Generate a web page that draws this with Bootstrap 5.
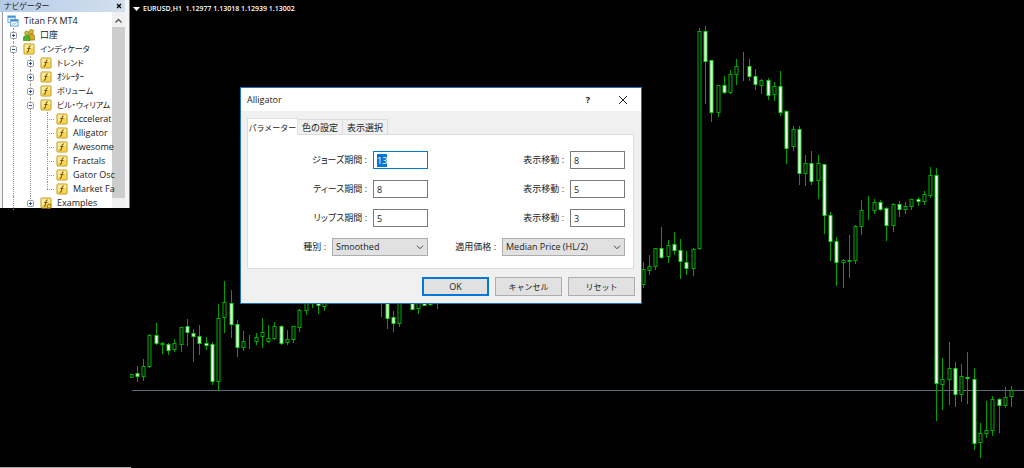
<!DOCTYPE html>
<html lang="ja">
<head>
<meta charset="utf-8">
<meta name="viewport" content="width=device-width, initial-scale=1">
<title>EURUSD,H1</title>
<link href="https://cdn.jsdelivr.net/npm/bootstrap@5.3.0/dist/css/bootstrap.min.css" rel="stylesheet">
<style>
  body { background: #000; color: #222; font: 9px/14px "Open Sans", "Noto Sans CJK JP", sans-serif; font-feature-settings: "palt"; }
  .kana { font-size: 8px; }

  /* navigator */
  .navigator { width: 130px; background: #f4f5f7; padding-right: 4px; border-right: 1px solid #777; align-self: flex-start; }
  .nav-title { height: 12px; line-height: 12px; background: linear-gradient(90deg, #b4cbe6, #d3e0ee); padding: 0 2px 0 4px; }
  .nav-title button { width: 8px; height: 8px; color: #000; }
  .nav-body { height: 196px; border-left: 1px solid #999; margin-left: 2px; background: #fff; }
  .tree { padding-top: 2px; white-space: nowrap; min-width: 0; }
  .tree ul { margin-left: 17px; }
  .tree li { position: relative; }
  .node { display: flex; align-items: center; height: 14px; }
  .node svg { width: 12px; height: 12px; flex: none; margin-right: 5px; }
  .node .pm { width: 7px; height: 7px; margin: 0 6px 0 7px; position: relative; z-index: 1; }
  .node .stub { width: 7px; height: 1px; margin: 0 2px 0 10px; border-top: 1px dotted #999; flex: none; }
  .tree .branch > li::before { content: ""; position: absolute; left: 10px; top: 0; bottom: 0; border-left: 1px dotted #999; }
  .tree .branch > li.tip::before { bottom: 7px; }
  .scroll { width: 13px; background: #f0f0f0; flex: none; }
  .scroll svg { width: 13px; height: 15px; display: block; }
  .thumb { height: 171px; background: #cdcdcd; }

  /* chart */
  .quote { color: #fff; font: 600 7px/10px "Open Sans", sans-serif; padding: 4px 3px; gap: 3px; white-space: pre; }
  .chart { inset: 0 0 auto 0; width: 100%; }
  .status-edge { left: 0; bottom: 0; width: 131px; height: 1px; background: #aaa; }

  /* dialog */
  .dlg { left: 240px; top: 87px; width: 402px; background: #f0f0f0; border: 1px solid #1d72b8; }
  .dlg-title { height: 23px; background: #fff; padding: 0 13px 0 6px; }
  .dlg-title button { color: #111; line-height: 12px; }
  .dlg-body { padding: 7px 6px; }
  .dlg .nav-tabs { border: 0; padding-left: 0; align-items: flex-end; }
  .dlg .nav-link { border: 1px solid #dcdcdc; border-bottom: 0; border-left: 0; border-radius: 0; margin: 0; color: #222; background: #f0f0f0; padding: 0; height: 15px; line-height: 15px; font-size: 9px; width: 45px; text-align: center; white-space: nowrap; }
  .dlg .nav-link.active { background: #fff; color: #222; height: 17px; width: 51px; font-size: 8px; border-left: 1px solid #dcdcdc; margin-bottom: -1px; position: relative; }
  .dlg-panel { background: #fff; border: 1px solid #dcdcdc; padding: 16px 8px 12px 0; margin-right: 1px; }
  .fields { display: grid; grid-template-columns: 180px 1fr; row-gap: 11px; }
  .field-line { display: flex; justify-content: flex-end; align-items: center; gap: 6px; }
  .dlg .form-control, .dlg .form-select { height: 18px; min-height: 0; border: 1px solid #7a7a7a; border-radius: 0; padding: 0 3px; font-size: 9px; line-height: 14px; color: #222; box-shadow: none; }
  .dlg .form-control { width: 55px; }
  .dlg .form-control:focus { border-color: #0078d7; }
  .form-control::selection { background: #0078d7; color: #fff; }
  .dlg .form-select { width: 96px; background-color: #e1e1e1; border-color: #adadad; padding-right: 14px;
    background-image: url("data:image/svg+xml,%3Csvg xmlns='http://www.w3.org/2000/svg' viewBox='0 0 8 5'%3E%3Cpath d='M1 .7l3 3 3-3' fill='none' stroke='%23444'/%3E%3C/svg%3E"); background-position: right 3px center; background-size: 8px 5px; }
  .dlg .form-select.wide { width: 123px; }
  .buttons { gap: 6px; margin-top: 8px; }
  .dlg .btn { width: 67px; height: 19px; border: 1px solid #adadad; border-radius: 0; background: #e1e1e1; color: #222; padding: 0; font-size: 8px; line-height: 15px; }
  .dlg .btn.ok { border: 2px solid #0078d7; font-size: 9px; }
</style>
</head>
<body>
<svg width="0" height="0" class="position-absolute" aria-hidden="true">
  <symbol id="fx" viewBox="0 0 13 13">
    <rect x="1" y="1" width="11" height="11" rx="1" fill="#f3d55a" stroke="#c79a22"/>
    <path d="M2 2h9v3l-9 4z" fill="#fbeb9c"/>
    <path d="M8.600 3.400c-1.500-.7-1.900.4-2.200 2L5.700 9c-.3 1-.9 1.100-1.600.8M4.600 6h3.500" fill="none" stroke="#7a5205" stroke-width="1.100"/>
  </symbol>
  <symbol id="fxgear" viewBox="0 0 13 13">
    <use href="#fx"/>
    <circle cx="10" cy="10" r="2" fill="#f6e07c" stroke="#a87c12" stroke-width="1.200"/>
  </symbol>
  <symbol id="plus" viewBox="0 0 7 7"><rect x=".5" y=".5" width="6" height="6" rx="1" fill="#f6f8fb" stroke="#999"/><path d="M2 3.500h3M3.500 2v3" stroke="#2c4fa0"/></symbol>
  <symbol id="minus" viewBox="0 0 7 7"><rect x=".5" y=".5" width="6" height="6" rx="1" fill="#f6f8fb" stroke="#999"/><path d="M2 3.500h3" stroke="#2c4fa0"/></symbol>
  <symbol id="terminal" viewBox="0 0 13 13">
    <rect x="1" y="1" width="8" height="7" fill="#e8f4fd" stroke="#6aa9de"/><path d="M1 2h8" stroke="#4a94d6" stroke-width="2"/>
    <rect x="4" y="5" width="8" height="7" fill="#f4faff" stroke="#5a9fd9"/><path d="M4 6h8" stroke="#3d8bd0" stroke-width="2"/>
    <path d="M5.500 10.500l1.500-1.500 1.500 1 2-2" fill="none" stroke="#6ba3d0" stroke-width=".7"/>
  </symbol>
  <symbol id="people" viewBox="0 0 13 13">
    <circle cx="9" cy="3" r="2.500" fill="#e2b727" stroke="#96700a" stroke-width=".7"/><path d="M5.500 12V8q0-2.500 3.500-2.500T12.600 8v4z" fill="#dca91c" stroke="#8a6508" stroke-width=".7"/>
    <circle cx="4" cy="4.500" r="2.200" fill="#d9b92e" stroke="#7d7a12" stroke-width=".7"/><path d="M.5 12.500V9.500Q.7 7 4 7t3.500 2.500v3z" fill="#45b52c" stroke="#3a7c10" stroke-width=".7"/>
  </symbol>
</svg>

<div class="d-flex min-vh-100 position-relative">
  <aside class="navigator">
    <div class="nav-title kana d-flex justify-content-between align-items-center">
      <span>ナビゲーター</span><button type="button" class="border-0 bg-transparent p-0 d-flex align-items-center justify-content-center" aria-label="閉じる"><svg width="6" height="6" viewBox="0 0 6 6"><path d="M1 1l4 4M5 1L1 5" stroke="#000" stroke-width="1.300"/></svg></button>
    </div>
    <div class="nav-body d-flex">
      <div class="tree flex-grow-1">
        <div class="node ps-1"><svg><use href="#terminal"/></svg>Titan FX MT4</div>
        <ul class="list-unstyled m-0 branch">
          <li><div class="node"><svg class="pm"><use href="#plus"/></svg><svg><use href="#people"/></svg>口座</div></li>
          <li><div class="node kana"><svg class="pm"><use href="#minus"/></svg><svg><use href="#fx"/></svg>インディケータ</div>
            <ul class="list-unstyled mb-0 branch">
              <li><div class="node kana"><svg class="pm"><use href="#plus"/></svg><svg><use href="#fx"/></svg>トレンド</div></li>
              <li><div class="node"><svg class="pm"><use href="#plus"/></svg><svg><use href="#fx"/></svg>ｵｼﾚｰﾀｰ</div></li>
              <li><div class="node kana"><svg class="pm"><use href="#plus"/></svg><svg><use href="#fx"/></svg>ボリューム</div></li>
              <li><div class="node kana"><svg class="pm"><use href="#minus"/></svg><svg><use href="#fx"/></svg>ビル・ウィリアム</div>
                <ul class="list-unstyled mb-0 branch">
                  <li><div class="node"><i class="stub"></i><svg><use href="#fx"/></svg>Accelerat</div></li>
                  <li><div class="node"><i class="stub"></i><svg><use href="#fx"/></svg>Alligator</div></li>
                  <li><div class="node"><i class="stub"></i><svg><use href="#fx"/></svg>Awesome</div></li>
                  <li><div class="node"><i class="stub"></i><svg><use href="#fx"/></svg>Fractals</div></li>
                  <li><div class="node"><i class="stub"></i><svg><use href="#fx"/></svg>Gator Osc</div></li>
                  <li class="tip"><div class="node"><i class="stub"></i><svg><use href="#fx"/></svg>Market Fa</div></li>
                </ul>
              </li>
            </ul>
          </li>
          <li><ul class="list-unstyled mb-0 branch"><li class="tip"><div class="node"><svg class="pm"><use href="#plus"/></svg><svg><use href="#fxgear"/></svg>Examples</div></li></ul></li>
        </ul>
      </div>
      <div class="scroll">
        <svg viewBox="0 0 13 15"><path d="M3.500 10.500l3-3 3 3" fill="none" stroke="#555" stroke-width="1.300"/></svg>
        <div class="thumb"></div>
      </div>
    </div>
  </aside>

  <main class="flex-grow-1 position-relative overflow-hidden">
    <svg class="chart position-absolute" id="chart" viewBox="130 0 894 468" role="img" aria-label="EURUSD H1"></svg>
    <div class="quote position-relative d-flex align-items-center"><svg width="7" height="4" viewBox="0 0 7 4"><path d="M0 0h7L3.500 4z" fill="#fff"/></svg><span>EURUSD,H1  1.12977 1.13018 1.12939 1.13002</span></div>
  </main>

  <form class="dlg position-absolute" role="dialog" aria-label="Alligator">
    <div class="dlg-title d-flex align-items-center">
      <span class="flex-grow-1">Alligator</span>
      <button type="button" class="border-0 bg-transparent p-0 me-4 fw-bold" aria-label="ヘルプ">?</button>
      <button type="button" class="border-0 bg-transparent p-0 ms-1 d-flex" aria-label="閉じる"><svg width="10" height="10" viewBox="0 0 10 10"><path d="M1 1l8 8M9 1L1 9" stroke="#222"/></svg></button>
    </div>
    <div class="dlg-body">
      <div class="nav nav-tabs" role="tablist">
        <button type="button" class="nav-link active" role="tab">パラメーター</button>
        <button type="button" class="nav-link" role="tab">色の設定</button>
        <button type="button" class="nav-link" role="tab">表示選択</button>
      </div>
      <div class="dlg-panel">
        <div class="fields">
          <div class="field-line"><label for="jaw">ジョーズ期間 :</label><input class="form-control" id="jaw" value="13"></div>
          <div class="field-line"><label for="s1">表示移動 :</label><input class="form-control" id="s1" value="8"></div>
          <div class="field-line"><label for="teeth">ティース期間 :</label><input class="form-control" id="teeth" value="8"></div>
          <div class="field-line"><label for="s2">表示移動 :</label><input class="form-control" id="s2" value="5"></div>
          <div class="field-line"><label for="lips">リップス期間 :</label><input class="form-control" id="lips" value="5"></div>
          <div class="field-line"><label for="s3">表示移動 :</label><input class="form-control" id="s3" value="3"></div>
          <div class="field-line"><label for="method">種別 :</label><select class="form-select" id="method"><option>Smoothed</option></select></div>
          <div class="field-line"><label for="price">適用価格 :</label><select class="form-select wide" id="price"><option>Median Price (HL/2)</option></select></div>
        </div>
      </div>
      <div class="buttons d-flex justify-content-end">
        <button type="button" class="btn ok">OK</button>
        <button type="button" class="btn">キャンセル</button>
        <button type="button" class="btn">リセット</button>
      </div>
    </div>
  </form>
  <div class="status-edge position-absolute"></div>
</div>

<script src="https://cdn.jsdelivr.net/npm/bootstrap@5.3.0/dist/js/bootstrap.bundle.min.js"></script>
<script>
  // bar index, high, low, body top, body bottom, 1 = bearish (filled)
  const bars = [
    [-1,374,377,374,377,0],[0,366,381,373,376,1],[1,359,380,366,376,0],[2,334,367,335,366,0],[3,323,344,335,343,1],[4,342,353,343,344,0],[5,343,354,344,350,1],[6,339,351,343,349,0],
    [7,327,351,327,344,0],[8,319,345,326,332,1],[9,329,361,333,336,1],[10,325,354,336,343,1],[11,337,349,343,345,1],[12,342,384,344,381,1],[13,304,390,318,381,0],[14,281,332,302,317,0],
    [15,290,337,303,324,1],[16,320,356,324,347,1],[17,331,350,341,347,0],[18,335,348,341,341,0],[19,333,344,337,341,0],[20,318,347,332,336,0],[21,325,342,338,341,0],[22,322,339,326,338,0],
    [23,325,344,326,343,1],[24,330,344,339,342,0],[25,326,342,326,339,0],[26,309,331,310,327,0],[27,300,314,300,310,0],[28,300,307,300,302,0],[29,300,313,300,305,1],[30,300,310,300,306,0],
    [39,300,316,300,301,0],[40,300,328,300,318,1],[41,311,331,317,323,1],[42,300,326,300,323,0],[44,300,309,300,309,1],[45,300,313,300,308,0],[46,300,305,300,305,1],[47,300,305,300,304,1],[48,300,308,300,301,0],
    [81,262,287,269,284,0],[82,255,274,266,270,0],[83,248,269,248,266,0],[84,227,258,248,257,1],[85,240,262,245,256,0],[86,232,254,244,250,1],[87,239,278,250,261,1],[88,251,274,262,268,1],
    [89,248,275,249,268,0],[90,28,249,31,248,0],[91,26,103,31,61,1],[92,60,121,60,112,1],[93,85,116,85,112,0],[94,76,93,85,92,1],[95,70,93,74,92,0],[96,59,84,66,74,0],[97,52,80,66,66,0],
    [98,59,80,66,76,1],[99,69,89,76,84,1],[100,79,93,80,85,0],[101,78,99,80,95,1],[102,82,100,86,94,0],[103,71,115,86,112,1],[104,110,163,111,148,1],[105,126,150,129,146,0],
    [106,126,184,129,173,1],[107,155,185,163,173,0],[108,151,184,163,181,1],[109,155,198,163,180,0],[110,164,233,164,215,1],[111,212,260,215,241,1],[112,237,285,241,262,1],[113,259,287,260,262,0],
    [114,235,277,260,261,0],[115,225,263,226,260,0],[116,200,234,210,226,0],[117,196,219,210,210,0],[118,199,213,202,210,0],[119,200,210,202,209,1],[120,207,240,208,225,1],[121,203,231,204,225,0],
    [122,201,216,204,209,1],[123,202,213,206,209,0],[124,199,209,199,206,0],[125,197,205,199,201,1],[126,191,204,194,201,0],[127,167,197,175,195,0],[128,168,420,175,383,1],
    [129,358,409,379,384,0],[130,342,404,368,379,0],[131,362,406,368,394,1],[132,364,401,376,394,0],[133,352,403,377,378,1],[134,368,449,379,443,1],[135,423,457,433,442,0],[136,401,437,430,433,0],
    [137,396,435,399,430,0],[138,398,432,399,405,1],[139,387,407,397,405,0],[140,386,406,390,396,0]
  ];
  let out = '<path d="M132 390.500H1024" stroke="#5d6a7c"/>';
  for (const [i, high, low, top, bottom, filled] of bars) {
    const x = Math.round(137 + i * 6.244) + 0.5;
    out += `<path d="M${x} ${high}V${low + 1}" stroke="#00a000"/>`
      + `<rect x="${x - 1.5}" y="${top + 0.5}" width="3" height="${bottom - top}" fill="${filled ? '#fff' : '#000'}" stroke="${filled ? '#10d810' : '#00b000'}"/>`;
  }
  document.getElementById('chart').innerHTML = out;
  const jaw = document.getElementById('jaw');
  jaw.focus();
  jaw.select();
</script>
</body>
</html>
